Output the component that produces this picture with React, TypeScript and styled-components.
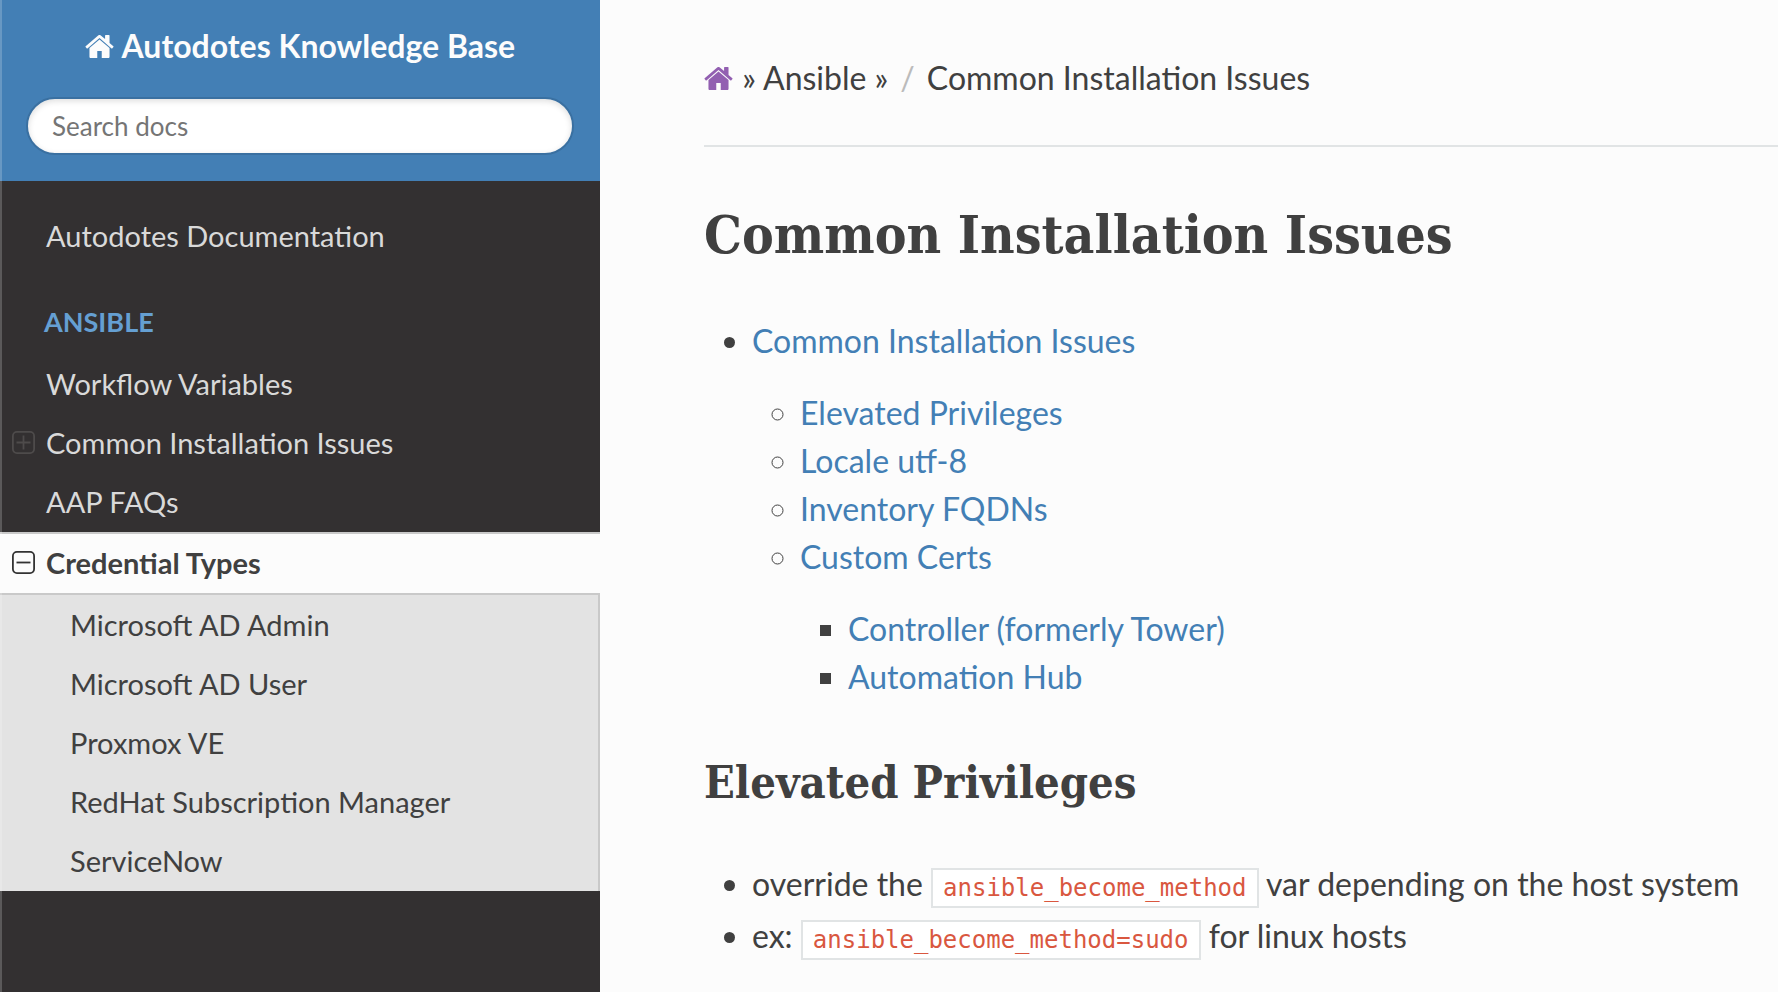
import React from "react";
import styled, { createGlobalStyle, css } from "styled-components";

const color = {
  blue: "#437fb5",
  text: "#404040",
  dark: "#333031",
  page: "#fcfcfc",
  line: "#e1e4e5",
  edge: "#c9c9c9",
};

const GlobalStyle = createGlobalStyle`
  *, *::before, *::after { box-sizing: border-box; }
  body {
    margin: 0;
    background: ${color.page};
    color: ${color.text};
    font-family: Lato, "Noto Sans", sans-serif;
    font-size: 32px;
    line-height: 48px;
  }
  a { text-decoration: none; }
  ul { margin: 0; padding: 0; }
`;

const Page = styled.div`
  display: flex;
  min-height: 100vh;
`;

const Sidebar = styled.nav`
  position: relative;
  flex: 0 0 600px;
  background: ${color.dark};

  &::after {
    content: "";
    position: absolute;
    inset: 0 auto 0 0;
    width: 2px;
    background: rgba(255, 255, 255, 0.2);
    pointer-events: none;
  }
`;

const SearchHeader = styled.header`
  display: flex;
  flex-direction: column;
  align-items: center;
  gap: 31px;
  padding: 26px;
  background: ${color.blue};
`;

const SiteTitle = styled.a`
  color: ${color.page};
  font-weight: 700;
  line-height: 40px;
`;

const SearchForm = styled.form`
  display: flex;
  width: 100%;
`;

const SearchInput = styled.input`
  width: 100%;
  height: 58px;
  padding: 0 24px;
  border: 2px solid #3a70a1;
  border-radius: 50px;
  background: #fff;
  box-shadow: inset 0 2px 6px #ddd;
  color: ${color.text};
  font-family: inherit;
  font-size: 26px;
  outline: none;

  &::placeholder { color: #757575; opacity: 1; }
`;

const Menu = styled.div`
  padding: 26px 0;
`;

const MenuCaption = styled.p`
  margin: 24px 0 1px;
  padding: 0 44px;
  color: #659fd2;
  font-size: 27px;
  font-weight: 700;
  line-height: 64px;
  text-transform: uppercase;
`;

const MenuList = styled.ul`
  list-style: none;
`;

const MenuRow = styled.li<{ $current?: boolean }>`
  display: flex;
  align-items: center;
  padding-bottom: 2px;
  ${(p) =>
    p.$current &&
    css`
      border: solid ${color.edge};
      border-width: 2px 0;
      background: ${color.page};
    `}
`;

const MenuLink = styled.a<{ $current?: boolean }>`
  flex: 1;
  padding-right: 46px;
  color: ${(p) => (p.$current ? color.text : "#d9d9d9")};
  font-size: 29px;
  font-weight: ${(p) => (p.$current ? 700 : 400)};
  line-height: 57px;

  &:first-child { padding-left: 46px; }
`;

const SubList = styled(MenuList)`
  padding-bottom: 1px;
  border-right: 2px solid ${color.edge};
  background: #e3e3e3;
`;

const SubLink = styled.a`
  display: block;
  padding: 0 46px 0 70px;
  color: ${color.text};
  font-size: 29px;
  line-height: 59px;
`;

const Expander = styled.button<{ $current?: boolean }>`
  display: flex;
  flex: 0 0 46px;
  padding: 0 0 0 12px;
  border: 0;
  background: none;
  color: ${(p) => (p.$current ? "#333" : "#4e4b4b")};
  cursor: pointer;
`;

const Content = styled.main`
  flex: 1;
  min-width: 0;
  padding: 54px 0 32px 104px;
`;

const Breadcrumbs = styled.ul`
  display: flex;
  list-style: none;
`;

const Crumb = styled.li`
  white-space: pre;

  & + &::before {
    content: "/";
    padding: 0 12px;
    color: #bbb;
  }
`;

const HomeLink = styled.a`
  color: #925fb1;
`;

const Rule = styled.hr`
  height: 2px;
  margin: 43px 0 49px;
  border: 0;
  background: ${color.line};
`;

const Heading = styled.h1`
  margin: 0 0 45px;
  font-family: "Roboto Slab", "DejaVu Serif Condensed", "DejaVu Serif", serif;
  font-size: 53px;
  font-weight: 700;
  line-height: 76px;
`;

const SubHeading = styled(Heading).attrs({ as: "h2" })`
  margin: 46px 0 41px;
  font-size: 45px;
  line-height: 72px;
`;

const BulletList = styled.ul<{ $marker?: string; $nested?: boolean }>`
  list-style: ${(p) => p.$marker ?? "disc"};
  padding-left: 48px;
  margin-top: ${(p) => (p.$nested ? "24px" : "0")};
`;

const DocLink = styled.a`
  color: ${color.blue};
`;

const Code = styled.code`
  padding: 4px 10px;
  border: 2px solid ${color.line};
  background: #fff;
  color: #d9573f;
  font-family: "DejaVu Sans Mono", monospace;
  font-size: 24px;
  white-space: nowrap;
`;

const HomeGlyph = styled.svg`
  width: 29px;
  height: 23px;
  margin-right: 1px;
`;

const HomeIcon = () => (
  <HomeGlyph viewBox="64 256 1664 1280" preserveAspectRatio="none" fill="currentColor" aria-hidden="true">
    <path d="M1472 992v480q0 26-19 45t-45 19h-384v-384h-256v384h-384q-26 0-45-19t-19-45v-480q0-1 .5-3t.5-3l575-474 575 474q1 2 1 6zm223-69l-62 74q-8 9-21 11h-3q-13 0-21-7l-692-577-692 577q-12 8-24 7-13-2-21-11l-62-74q-8-10-7-23.5t11-21.5l719-599q32-26 76-26t76 26l244 204v-195q0-14 9-23t23-9h192q14 0 23 9t9 23v408l219 182q10 8 11 21.5t-7 23.5z" />
  </HomeGlyph>
);

const ToggleIcon = ({ open }: { open?: boolean }) => (
  <svg width="23" height="23" viewBox="0 0 23 23" fill="none" stroke="currentColor" strokeWidth="1.8" aria-hidden="true">
    <rect x="0.9" y="0.9" width="21.2" height="21.2" rx="4" />
    <path d={open ? "M4.5 11.5h14" : "M4.5 11.5h14M11.5 4.5v14"} />
  </svg>
);

const menu = [
  { label: "Workflow Variables" },
  { label: "Common Installation Issues", expandable: true },
  { label: "AAP FAQs" },
  { label: "Credential Types", expandable: true, current: true },
];

const credentialTypes = [
  "Microsoft AD Admin",
  "Microsoft AD User",
  "Proxmox VE",
  "RedHat Subscription Manager",
  "ServiceNow",
];

export default function App() {
  return (
    <>
      <GlobalStyle />
      <Page>
        <Sidebar aria-label="Documentation">
          <SearchHeader>
            <SiteTitle href="#">
              <HomeIcon /> Autodotes Knowledge Base
            </SiteTitle>
            <SearchForm role="search">
              <SearchInput type="text" placeholder="Search docs" aria-label="Search docs" />
            </SearchForm>
          </SearchHeader>
          <Menu>
            <MenuList>
              <MenuRow>
                <MenuLink href="#">Autodotes Documentation</MenuLink>
              </MenuRow>
            </MenuList>
            <MenuCaption>Ansible</MenuCaption>
            <MenuList>
              {menu.map((item) => (
                <MenuRow key={item.label} $current={item.current}>
                  {item.expandable && (
                    <Expander
                      type="button"
                      $current={item.current}
                      aria-expanded={Boolean(item.current)}
                      aria-label={`Toggle ${item.label}`}
                    >
                      <ToggleIcon open={item.current} />
                    </Expander>
                  )}
                  <MenuLink href="#" $current={item.current}>
                    {item.label}
                  </MenuLink>
                </MenuRow>
              ))}
            </MenuList>
            <SubList>
              {credentialTypes.map((label) => (
                <li key={label}>
                  <SubLink href="#">{label}</SubLink>
                </li>
              ))}
            </SubList>
          </Menu>
        </Sidebar>
        <Content>
          <Breadcrumbs aria-label="Breadcrumbs">
            <Crumb>
              <HomeLink href="#" aria-label="Home">
                <HomeIcon />
              </HomeLink>
              {" » Ansible »"}
            </Crumb>
            <Crumb>Common Installation Issues</Crumb>
          </Breadcrumbs>
          <Rule />
          <Heading>Common Installation Issues</Heading>
          <BulletList>
            <li>
              <DocLink href="#common">Common Installation Issues</DocLink>
              <BulletList $marker="circle" $nested>
                <li><DocLink href="#elevated">Elevated Privileges</DocLink></li>
                <li><DocLink href="#locale">Locale utf-8</DocLink></li>
                <li><DocLink href="#inventory">Inventory FQDNs</DocLink></li>
                <li>
                  <DocLink href="#certs">Custom Certs</DocLink>
                  <BulletList $marker="square" $nested>
                    <li><DocLink href="#controller">Controller (formerly Tower)</DocLink></li>
                    <li><DocLink href="#hub">Automation Hub</DocLink></li>
                  </BulletList>
                </li>
              </BulletList>
            </li>
          </BulletList>
          <SubHeading>Elevated Privileges</SubHeading>
          <BulletList>
            <li>
              override the <Code>ansible_become_method</Code> var depending on the host system
            </li>
            <li>
              ex: <Code>ansible_become_method=sudo</Code> for linux hosts
            </li>
          </BulletList>
        </Content>
      </Page>
    </>
  );
}
